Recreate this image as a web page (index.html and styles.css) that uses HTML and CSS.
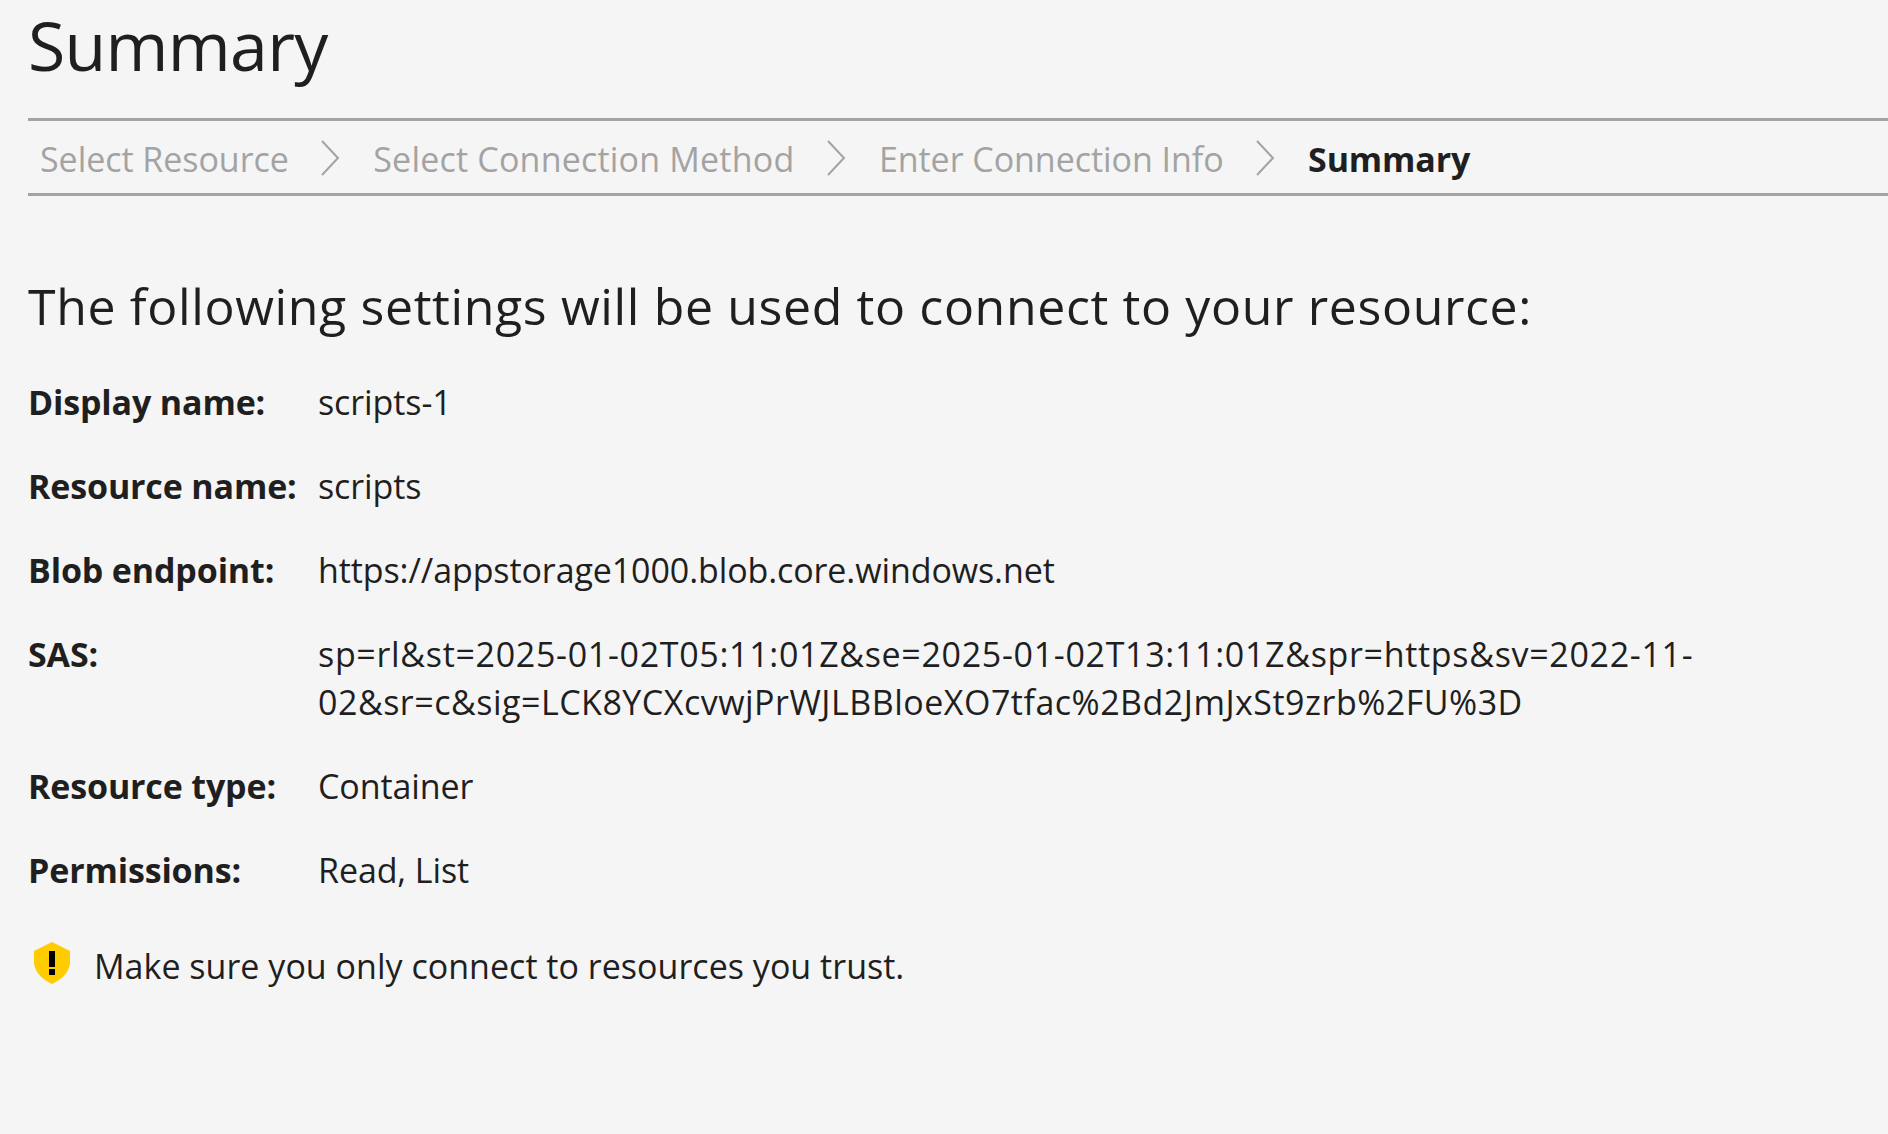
FILE: index.html
```html
<!DOCTYPE html>
<html lang="en">
<head>
<meta charset="utf-8">
<title>Summary</title>
<link rel="stylesheet" href="styles.css">
</head>
<body>
<main class="page">
  <h1 class="title">Summary</h1>
  <nav class="steps">
    <span class="step">Select Resource</span>
    <svg class="chev" viewBox="0 0 20 36"><path d="M2 1 L18 18 L2 35"/></svg>
    <span class="step step-wide">Select Connection Method</span>
    <svg class="chev" viewBox="0 0 20 36"><path d="M2 1 L18 18 L2 35"/></svg>
    <span class="step">Enter Connection Info</span>
    <svg class="chev" viewBox="0 0 20 36"><path d="M2 1 L18 18 L2 35"/></svg>
    <span class="step current">Summary</span>
  </nav>
  <h2 class="lead">The following settings will be used to connect to your resource:</h2>
  <dl class="details">
    <dt>Display name:</dt><dd>scripts-1</dd>
    <dt>Resource name:</dt><dd>scripts</dd>
    <dt>Blob endpoint:</dt><dd>https://appstorage1000.blob.core.windows.net</dd>
    <dt>SAS:</dt><dd class="sas"><span class="sas-first">sp=rl&amp;st=2025-01-02T05:11:01Z&amp;se=2025-01-02T13:11:01Z&amp;spr=https&amp;sv=2022-11-</span><br><span class="sas-second">02&amp;sr=c&amp;sig=LCK8YCXcvwjPrWJLBBloeXO7tfac%2Bd2JmJxSt9zrb%2FU%3D</span></dd>
    <dt>Resource type:</dt><dd>Container</dd>
    <dt>Permissions:</dt><dd>Read, List</dd>
  </dl>
  <div class="notice">
    <svg class="shield" viewBox="0 0 36 42"><path class="shield-bg" d="M18 0 L36 9 V20 C36 30 27 38 18 42 C9 38 0 30 0 20 V9 Z"/><rect x="15" y="9" width="6" height="16"/><rect x="15" y="27" width="6" height="6"/></svg>
    <span>Make sure you only connect to resources you trust.</span>
  </div>
</main>
</body>
</html>
```
FILE: styles.css
```css
html, body { margin: 0; padding: 0; height: 100%; background: #f5f5f5; }
body { font-family: "Open Sans", "Noto Sans", sans-serif; color: #1f1f1f; overflow: hidden; }
.page { padding-left: 28px; }
.title { margin: 0; font-size: 68px; font-weight: 400; line-height: 90px; height: 118px; box-sizing: border-box; letter-spacing: -.7px; }
.steps { display: flex; align-items: center; box-sizing: border-box; height: 78px; padding-top: 4px; border-top: 3px solid #a3a3a3; border-bottom: 3px solid #a3a3a3; padding-left: 12px; font-size: 34px; color: #a3a3a3; font-weight: 400; letter-spacing: 0; }
.step { white-space: nowrap; letter-spacing: -.05px; }
.step-wide { letter-spacing: .2px; }
.step.current { color: #1f1f1f; font-weight: 700; letter-spacing: -.15px; }
.chev { width: 20px; height: 36px; margin: -2px 33px 0 31.5px; fill: none; stroke: #a3a3a3; stroke-width: 2; }
.lead { margin: 77px 0 0; font-size: 50px; font-weight: 400; line-height: 66px; letter-spacing: .63px; }
.details { display: grid; grid-template-columns: 290px 1fr; row-gap: 36px; margin: 39px 0 0; font-size: 34px; line-height: 48px; letter-spacing: -.1px; }
.details dt { font-weight: 700; letter-spacing: -.15px; }
.details dd { margin: 0; }
.sas-first { letter-spacing: .68px; }
.sas-second { letter-spacing: .5px; }
.notice { display: flex; align-items: center; gap: 24px; margin-top: 48px; font-size: 34px; line-height: 48px; letter-spacing: .02px; padding-left: 6px; }
.shield { width: 36px; height: 42px; margin-bottom: 6px; }
.shield-bg { fill: #ffcc00; }
```
